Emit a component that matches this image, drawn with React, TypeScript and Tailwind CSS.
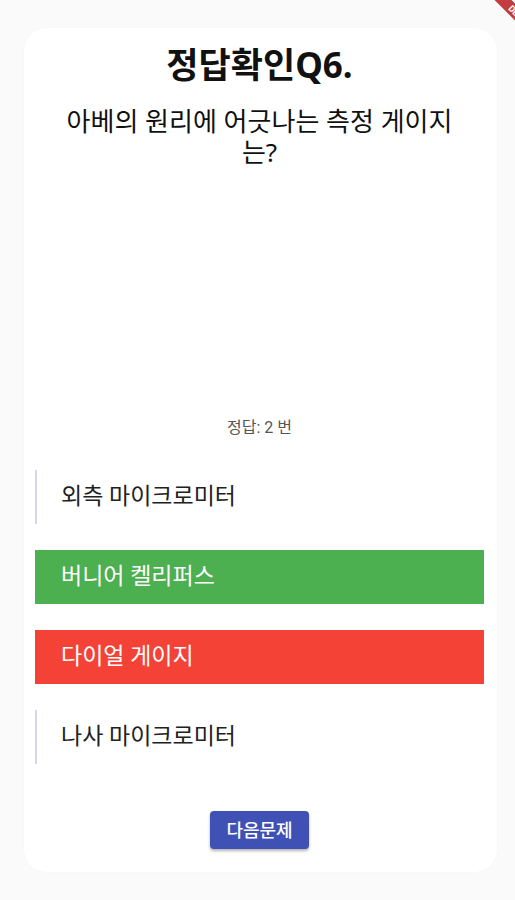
const options = [
    { label: "외측 마이크로미터", state: "none" },
    { label: "버니어 켈리퍼스", state: "correct" },
    { label: "다이얼 게이지", state: "wrong" },
    { label: "나사 마이크로미터", state: "none" },
];

function OptionRow({ label, state }: { label: string; state: string }) {
    if (state === "correct")
        return (
            <div className="h-[54px] flex items-center pl-[26px] bg-[#4caf50] text-white text-[23px]">
                {label}
            </div>
        );
    if (state === "wrong")
        return (
            <div className="h-[54px] flex items-center pl-[26px] bg-[#f44336] text-white text-[23px]">
                {label}
            </div>
        );
    return (
        <div className="h-[54px] flex items-center pl-[24px] border-l-2 border-[#d6d6e6] text-[#212121] text-[23px]">
            {label}
        </div>
    );
}

export default function App() {
    return (
        <div
            className="relative w-[515px] h-[900px] overflow-hidden bg-[#fafafa] pt-[28px]"
            style={{ fontFamily: "Roboto, 'Noto Sans CJK KR', sans-serif" }}
        >
            {/* debug ribbon */}
            <div className="absolute left-[470px] top-[10.5px] w-[100px] h-[12px] rotate-45 bg-[#b71c1c]/85 flex items-center justify-center text-white text-[9px] font-bold leading-none">
                DEBUG
            </div>

            <div className="mx-[24px] w-[473px] h-[844px] bg-white rounded-[22px] shadow-[0_0_2px_rgba(0,0,0,0.04)] pl-[11px] pr-[13px] pt-[16px] flex flex-col">
                <h1
                    className="text-center text-[35px] leading-[42px] font-bold text-[#111]"
                    style={{ fontFamily: "'Noto Sans', 'Noto Sans CJK KR', sans-serif" }}
                >
                    정답확인Q6.
                </h1>
                <p
                    className="mt-[20px] text-center text-[26px] leading-[31px] text-[#111]"
                    style={{ fontFamily: "'Noto Sans', 'Noto Sans CJK KR', sans-serif" }}
                >
                    아베의 원리에 어긋나는 측정 게이지
                    <br />
                    는?
                </p>

                <p className="mt-[250px] text-center text-[16px] leading-[20px] text-[#555]">
                    정답: 2 번
                </p>

                <div className="mt-[32px] flex flex-col gap-[26px]">
                    {options.map((o) => (
                        <OptionRow key={o.label} label={o.label} state={o.state} />
                    ))}
                </div>

                <div className="mt-[47px] flex justify-center">
                    <button className="w-[99px] h-[38px] rounded-[4px] bg-[#3f51b5] text-white text-[18px] font-medium shadow-[0_2px_3px_rgba(0,0,0,0.3)]">
                        다음문제
                    </button>
                </div>
            </div>
        </div>
    );
}
